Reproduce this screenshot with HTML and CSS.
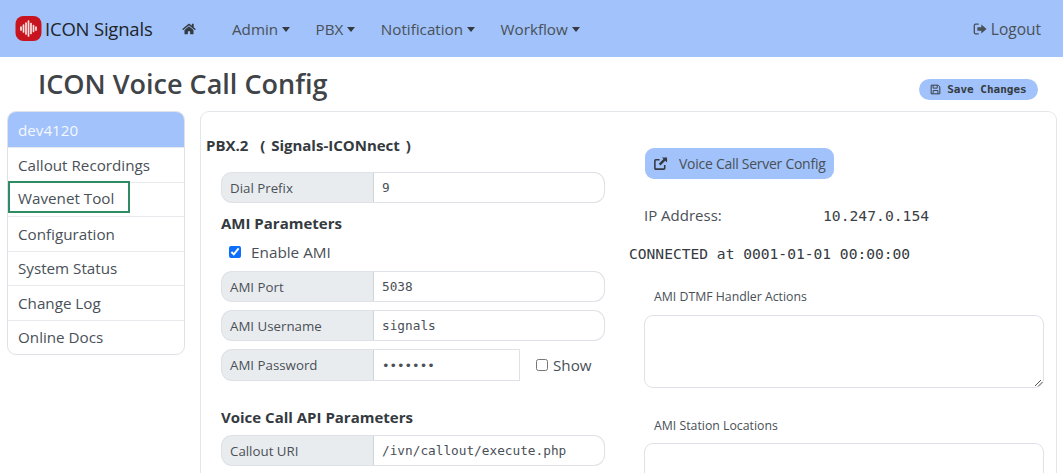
FILE: index.html
```html
<!DOCTYPE html>
<html lang="en">
<head>
<meta charset="utf-8">
<title>ICON Voice Call Config</title>
<link rel="stylesheet" href="styles.css">
</head>
<body>
<nav class="navbar">
  <a class="brand">
    <svg class="logo" viewBox="0 0 27 25" width="27" height="25"><rect x="0.500" y="0" width="26" height="25" rx="8" fill="#c8141e"/><g stroke="#fbe6e6" stroke-width="1.700" stroke-linecap="round"><path d="M6 11v3M8.500 9v7M11 7v11M13.500 5v15M16 7.500v10M18.500 9.500v6M21 11v3"/></g></svg>
    <span>ICON Signals</span>
  </a>
  <svg class="home" viewBox="0 0 576 512" width="14" height="12"><path fill="#343a40" d="M280 148 96 300v164c0 9 7 16 16 16l112-.3c9 0 16-7 16-16V368c0-9 7-16 16-16h64c9 0 16 7 16 16v95.600c0 9 7 16 16 16l112 .4c9 0 16-7 16-16V300L296 148c-4-3-12-3-16 0zM572 251l-84-69V44c0-7-5-12-12-12h-56c-7 0-12 5-12 12v72l-89-74c-18-14-43-14-61 0L4 251c-5 4-6 12-2 17l26 31c4 5 12 6 17 2L280 107c4-3 12-3 16 0l235 194c5 4 13 3 17-2l26-31c4-5 3-13-2-17z"/></svg>
  <ul class="menu">
    <li class="caret">Admin</li>
    <li class="caret">PBX</li>
    <li class="caret">Notification</li>
    <li class="caret">Workflow</li>
  </ul>
  <a class="logout">
    <svg viewBox="0 0 16 16" width="14" height="14"><path fill="none" stroke="#495057" stroke-width="1.500" d="M6.500 2.500H3a1.500 1.500 0 0 0-1.500 1.500v8A1.500 1.500 0 0 0 3 13.500h3.500"/><path fill="#495057" d="M5 6h4.500V2.800L15.500 8l-6 5.200V10H5z"/></svg>
    <span>Logout</span>
  </a>
</nav>

<header class="title-row">
  <h1>ICON Voice Call Config</h1>
  <button class="save">
    <svg viewBox="0 0 16 16" width="11" height="11"><path fill="none" stroke="#343a40" stroke-width="1.400" d="M1.700 1.700h10l2.600 2.600v10H1.700z"/><path fill="none" stroke="#343a40" stroke-width="1.300" d="M4.500 2v4h6V2M4.500 14V9.500h7V14"/></svg>
    <span>Save Changes</span>
  </button>
</header>

<div class="layout">
  <aside class="side">
    <div class="side-item active">dev4120</div>
    <div class="side-item">Callout Recordings</div>
    <div class="side-item"><span class="focus">Wavenet Tool</span></div>
    <div class="side-item">Configuration</div>
    <div class="side-item">System Status</div>
    <div class="side-item">Change Log</div>
    <div class="side-item">Online Docs</div>
  </aside>

  <main class="card">
    <section class="col-left">
      <h2 class="pbx">PBX.2 &nbsp;( Signals-ICONnect )</h2>
      <div class="group first"><label class="addon">Dial Prefix</label><div class="value">9</div></div>
      <h3 class="sub">AMI Parameters</h3>
      <label class="check"><input type="checkbox" class="box" checked><span>Enable AMI</span></label>
      <div class="group"><label class="addon">AMI Port</label><div class="value">5038</div></div>
      <div class="group"><label class="addon">AMI Username</label><div class="value">signals</div></div>
      <div class="group pw-row">
        <label class="addon">AMI Password</label><div class="value pw">&#8226;&#8226;&#8226;&#8226;&#8226;&#8226;&#8226;</div>
        <label class="show"><input type="checkbox" class="box-small"><span>Show</span></label>
      </div>
      <h3 class="sub api">Voice Call API Parameters</h3>
      <div class="group"><label class="addon">Callout URI</label><div class="value">/ivn/callout/execute.php</div></div>
    </section>
    <section class="col-right">
      <button class="server">
        <svg viewBox="0 0 16 16" width="15" height="15"><path fill="none" stroke="#343a40" stroke-width="1.700" d="M12.500 9.500V13a1 1 0 0 1-1 1H3a1 1 0 0 1-1-1V5a1 1 0 0 1 1-1h4"/><path fill="#343a40" d="M9.500 1.500H15v5.500l-2-2-5 5-1.800-1.800 5-5z"/></svg>
        <span>Voice Call Server Config</span>
      </button>
      <div class="ip"><span class="ip-label">IP Address:</span><span class="mono">10.247.0.154</span></div>
      <div class="status">CONNECTED at 0001-01-01 00:00:00</div>
      <label class="area-label">AMI DTMF Handler Actions</label>
      <div class="area"><svg class="grip" viewBox="0 0 9 9" width="9" height="9"><path stroke="#555" stroke-width="1" fill="none" d="M1 8 7 2M4 8.500 8.500 4"/></svg></div>
      <label class="area-label second">AMI Station Locations</label>
      <div class="area last"></div>
    </section>
  </main>
</div>
</body>
</html>
```
FILE: styles.css
```css
* { box-sizing: border-box; }
html, body { margin: 0; height: 473px; overflow: hidden; }
body { font-family: "Open Sans", "Noto Sans", sans-serif; color: #495057; background: #fff; font-size: 15px; }

.navbar { height: 57px; background: #a1c2fa; display: flex; align-items: center; padding: 0 22px 0 15px; }
.brand { display: flex; align-items: center; width: 167px; color: #212529; font-size: 18.500px; letter-spacing: -0.2px; }
.logo { margin-right: 3px; }
.home { margin: 1px 36px 0 0; }
.menu { list-style: none; display: flex; gap: 25.500px; margin: 0; padding: 0; flex: 1; color: #495057; font-size: 15.200px; }
.caret::after { content: ""; display: inline-block; margin-left: 4px; vertical-align: 3px; border-top: 5px solid #343a40; border-left: 4.500px solid transparent; border-right: 4.500px solid transparent; }
.logout { display: flex; align-items: center; gap: 4px; font-size: 15.500px; color: #495057; }

.title-row { height: 54px; display: flex; justify-content: space-between; align-items: center; padding: 0 25px 0 38px; }
h1 { margin: 0; font-size: 27px; font-weight: 600; color: #3f4448; line-height: 54px; }
.save { margin-top: 10px; width: 119px; height: 21px; border: 0; border-radius: 11px; background: #a1c2fa; display: flex; align-items: center; justify-content: center; gap: 6px; padding: 0; font-family: "DejaVu Sans Mono", monospace; font-size: 11px; font-weight: 700; color: #343a40; }

.layout { display: flex; padding: 0 6px 0 7px; align-items: flex-start; }
.side { width: 178px; border: 1px solid #dee2e6; border-radius: 9px; overflow: hidden; margin-right: 15px; }
.side-item { height: 34.500px; padding-left: 10px; display: flex; align-items: center; border-top: 1px solid #e7e9ec; font-size: 15.200px; color: #495057; }
.side-item:first-child { border-top: 0; }
.side-item.active { height: 35px; background: #a1c2fa; color: #f4f8ff; }
.side-item:has(.focus) { padding-left: 0; align-items: flex-start; }
.focus { width: 122px; height: 32px; margin-top: -2px; padding: 3px 0 0 8px; display: flex; align-items: center; border: 2px solid #2e8b64; }

.card { flex: 1; height: 380px; border: 1px solid #e4e7ea; border-bottom: 0; border-radius: 9px 9px 0 0; display: flex; overflow: hidden; }
.col-left { width: 444px; padding: 0 0 0 5px; flex: none; }
.pbx { margin: 23px 0 17px; font-size: 15px; font-weight: 700; word-spacing: 2px; color: #343a40; line-height: 20px; }
.sub { margin: 0 0 0 15px; font-size: 15px; font-weight: 700; color: #343a40; line-height: 20px; }
.group { display: flex; height: 31px; margin: 0 0 8px 15px; width: 384px; }
.group.first { margin-bottom: 10px; }
.addon { width: 153px; flex: none; background: #e9ecef; border: 1px solid #dee2e6; border-right-color: #ced4da; border-radius: 11px 0 0 11px; padding-left: 8px; display: flex; align-items: center; font-size: 13.300px; color: #495057; }
.value { flex: 1; background: #fff; border: 1px solid #dee2e6; border-left: 0; border-radius: 0 11px 11px 0; padding-left: 8px; display: flex; align-items: center; font-family: "DejaVu Sans Mono", monospace; font-size: 12.750px; color: #495057; }
.check { display: flex; align-items: center; height: 25px; margin: 6px 0 7px 23px; gap: 10px; font-size: 15.300px; }
.box { margin: 0; width: 12px; height: 12px; accent-color: #0d6efd; }
.pw-row { height: 32px; margin-bottom: 0; }
.value.pw { flex: none; width: 146px; border-radius: 0; border-color: #dee2e6; font-size: 12.500px; }
.show { margin-left: 16px; display: flex; align-items: center; gap: 5px; font-size: 15.200px; }
.box-small { margin: 0; width: 12px; height: 12px; }
.api { margin-top: 26px; margin-bottom: 8px; }

.col-right { flex: 1; padding-top: 36px; min-width: 0; }
.server { height: 31px; width: 189px; border: 0; border-radius: 9px; background: #a1c2fa; display: flex; align-items: center; gap: 11px; padding: 0 0 0 8px; font-family: "Open Sans", sans-serif; font-size: 14px; letter-spacing: -0.27px; color: #495057; }
.ip { margin: 26px 0 0 -1px; display: flex; height: 20px; align-items: center; font-size: 15px; }
.ip-label { width: 179px; }
.mono { font-family: "DejaVu Sans Mono", monospace; font-size: 14.700px; color: #3b4045; }
.status { margin: 20px 0 0 -16px; font-family: "DejaVu Sans Mono", monospace; font-size: 14.600px; color: #343a40; height: 18px; line-height: 18px; }
.area-label { display: block; margin: 25px 0 0 9px; font-size: 12.300px; height: 17px; line-height: 17px; color: #495057; }
.area { position: relative; margin: 10px 0 0 -1px; width: 400px; height: 73px; border: 1px solid #dee2e6; border-radius: 9px; }
.grip { position: absolute; right: 0; bottom: 0; }
.area-label.second { margin-top: 29px; }
.area.last { height: 60px; margin-top: 9px; }
```
